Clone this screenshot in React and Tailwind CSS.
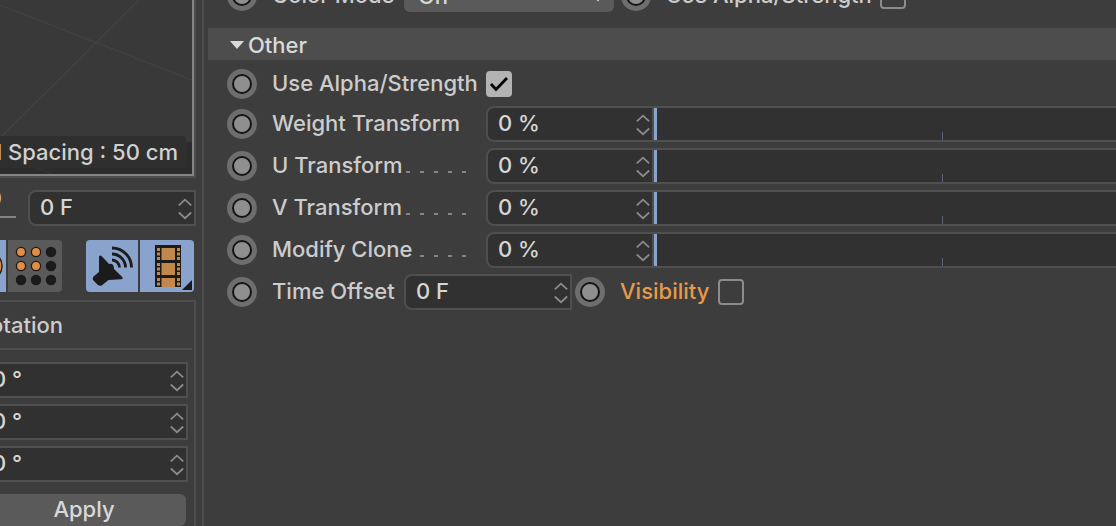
import React, { useState } from 'react';
import clsx from 'clsx';

const transforms = [
  { id: 'weight', label: 'Weight Transform', dots: 0 },
  { id: 'u', label: 'U Transform', dots: 5 },
  { id: 'v', label: 'V Transform', dots: 5 },
  { id: 'clone', label: 'Modify Clone', dots: 4 },
];

const Stepper = () => (
  <svg className="pointer-events-none shrink-0" width="16" height="24" viewBox="0 0 16 24" fill="none" stroke="#8b8b8b" strokeWidth="1.8">
    <path d="M0.8 9.3 L7 3.6 L13.2 9.3 M0.8 16.5 L7 22.2 L13.2 16.5" />
  </svg>
);

const NumberField = ({ label, id, value, className }) => {
  const [text, setText] = useState(value);
  return (
    <div className={clsx('flex h-9 shrink-0 items-center border-2 border-[#4f4f4f] bg-[#313131]', className)}>
      <input
        id={id}
        aria-label={label}
        value={text}
        onChange={(e) => setText(e.target.value)}
        className="h-8 w-full min-w-0 bg-transparent pb-0.5 text-[#d6d6d6] outline-none"
      />
      <Stepper />
    </div>
  );
};

const Keyframe = ({ label }) => (
  <button type="button" aria-label={label} className="flex size-[30px] shrink-0 items-center justify-center rounded-full bg-[#6e6e6e]">
    <span className="size-5 rounded-full border-2 border-[#151515] bg-[#8f8f8f]" />
  </button>
);

const Checkbox = ({ id, checked }) => {
  const [on, setOn] = useState(checked);
  return (
    <span className="grid size-[26px] shrink-0">
      <input
        id={id}
        type="checkbox"
        checked={on}
        onChange={() => setOn(!on)}
        className="col-start-1 row-start-1 size-[26px] appearance-none rounded border-2 border-[#8c8c8c] checked:border-[#b3b3b3] checked:bg-[#b3b3b3]"
      />
      {on && (
        <svg className="pointer-events-none col-start-1 row-start-1" viewBox="0 0 26 26" fill="none" stroke="#000" strokeWidth="2.8">
          <path d="M5 13 L10 18.5 L21 7" />
        </svg>
      )}
    </span>
  );
};

const Viewport = () => (
  <div className="w-full pr-1.5">
    <div className="border-r-2 border-b-2 border-[#4d4d4d]">
      <div className="grid h-[176px] border-r-2 border-b-2 border-[#858585] bg-[#393939]">
        <svg className="col-start-1 row-start-1 h-full w-full" viewBox="0 0 192 174" fill="none" stroke="#414141" strokeWidth="1.5">
          <path d="M0 142 H192 V174 H0Z" fill="#2c2c2c" stroke="none" />
          <path d="M0 5 L192 80 M0 138 L141 -2" />
          <path d="M28 164 L52 174" stroke="#333" />
        </svg>
        <div className="col-start-1 row-start-1 flex min-w-0 items-end justify-end self-end overflow-hidden pr-1.5 pb-1.5">
          <div className="flex h-8 shrink-0 items-center rounded-sm bg-[#2f2f2f] pr-2 pl-3 whitespace-nowrap text-[#d0d0d0]">
            Grid Spacing : 50 cm
          </div>
        </div>
      </div>
    </div>
  </div>
);

const dotRows = [12, 26, 40];

const Toolbar = () => (
  <div className="flex h-[52px] shrink-0 justify-end pr-2">
    <button type="button" aria-label="Parameter" className="w-[54px] shrink-0 rounded-l bg-[#8aa3cc]">
      <svg width="54" height="52" viewBox="0 0 54 52">
        <circle cx="35.500" cy="26" r="14.500" fill="#e38d42" stroke="#1b1b1b" strokeWidth="1.4" />
      </svg>
    </button>
    <button type="button" aria-label="Point level animation" className="ml-0.5 w-[54px] shrink-0 rounded-r bg-[#5a5a5a]">
      <svg width="54" height="52" viewBox="0 0 54 52">
        {dotRows.map((y, r) =>
          [13, 28, 43].map((x, c) => (
            <circle key={`${x}-${y}`} cx={x} cy={y} r="4.6" fill={r < 2 && c < 2 ? '#e38d42' : '#1b1b1b'} stroke="#1b1b1b" strokeWidth="1.3" />
          )),
        )}
      </svg>
    </button>
    <button type="button" aria-label="Play sound" className="ml-6 w-[52px] shrink-0 rounded-l bg-[#8aa3cc]">
      <svg width="52" height="52" viewBox="0 0 52 52">
        <path d="M13 16.5 Q14 14.5 16 16.5 L23 24 Q28 23 28 29 L36.5 37.3 Q37.5 39 35.5 39.3 L22.5 40 L16 45.3 Q14 46.5 12 45 L7.5 40.5 Q6 38.5 7.5 36.5 L13 32Z" fill="#1b1b1b" />
        <path d="M26 20 A7.5 7.5 0 0 1 33.5 27.5 M26 14 A13.5 13.5 0 0 1 39.5 27.5 M26 8 A19.5 19.5 0 0 1 45.5 27.5" fill="none" stroke="#1b1b1b" strokeWidth="2.8" />
      </svg>
    </button>
    <button type="button" aria-label="Frame rate" className="ml-0.5 w-[54px] shrink-0 rounded-r bg-[#8aa3cc]">
      <svg width="54" height="52" viewBox="0 0 54 52">
        <path d="M15 5 H41 V47 H15Z" fill="#1b1b1b" />
        <path d="M21.5 8 H35 V20 H21.5Z M21.5 23 H35 V35 H21.5Z M21.5 38 H35 V47 H21.5Z" fill="#c2874a" />
        {[8, 12.5, 17, 23, 27.5, 32, 38, 42.5].map((y) => (
          <path key={y} d={`M17 ${y} h3 v3 h-3Z M37 ${y} h3 v3 h-3Z`} fill="#c2874a" />
        ))}
        <path d="M52 40 V50 H42Z" fill="#1b1b1b" />
      </svg>
    </button>
  </div>
);

const LeftPanel = () => (
  <aside className="flex w-[204px] shrink-0 flex-col overflow-hidden border-r-2 border-[#4d4d4d]">
    <Viewport />
    <div className="mt-3 flex items-start justify-end pr-1.5">
      <div className="mr-3 flex h-7 w-16 shrink-0 justify-end border-b-2 border-[#858585] pr-[14px] leading-4">0</div>
      <NumberField label="Current frame" value="0 F" className="w-[168px] rounded-l-lg pl-[10px]" />
    </div>
    <div className="mt-3.5">
      <Toolbar />
    </div>
    <section className="mt-2 mr-1.5 flex grow flex-col items-end border-t-2 border-r-2 border-[#4d4d4d] pr-0.5">
      <h2 className="flex h-12 w-[300px] shrink-0 items-center justify-end border-b-2 border-[#4d4d4d] pr-[129px] font-[450]">Rotation</h2>
      <div className="mt-3 flex flex-col gap-1.5 pr-1">
        {['H', 'P', 'B'].map((axis) => (
          <NumberField key={axis} label={`Rotation ${axis}`} value="0 °" className="w-[206px] pl-2" />
        ))}
      </div>
      <button type="button" className="mt-3 mr-1.5 h-8 w-[204px] shrink-0 rounded-md bg-[#5a5a5a] pb-0.5 text-[#d8d8d8]">Apply</button>
    </section>
  </aside>
);

const TransformRow = ({ id, label, dots }) => {
  const [amount, setAmount] = useState(0);
  return (
    <div className="flex h-9 items-center">
      <Keyframe label={`Animate ${label}`} />
      <div className="ml-[15px] flex w-[214px] shrink-0 items-center pr-5">
        <label htmlFor={id} className="grow pb-0.5 whitespace-nowrap">{label}</label>
        <span className="flex gap-[10px] pt-3">
          {Array.from({ length: dots }, (_, i) => (
            <span key={i} className="h-0.5 w-1 bg-[#858585]" />
          ))}
        </span>
      </div>
      <NumberField id={id} value="0 %" className="w-[168px] rounded-l-lg pl-[10px]" />
      <div className="grid h-9 grow grid-cols-1 border-y-2 border-[#4f4f4f] bg-[#313131]">
        <span className="col-start-1 row-start-1 ml-72 h-2 w-px self-end bg-[#5b6577]" />
        <input
          type="range"
          aria-label={`${label} amount`}
          value={amount}
          onChange={(e) => setAmount(e.target.value)}
          className="col-start-1 row-start-1 h-8 w-full appearance-none bg-transparent [&::-webkit-slider-thumb]:h-8 [&::-webkit-slider-thumb]:w-[3px] [&::-webkit-slider-thumb]:appearance-none [&::-webkit-slider-thumb]:bg-[#8aa3cc]"
        />
      </div>
    </div>
  );
};

const Attributes = () => (
  <main className="min-w-0 grow overflow-hidden pl-1">
    <div className="flex h-7 items-end overflow-hidden pb-3.5 pl-[19px]">
      <div className="flex h-9 items-center">
        <Keyframe label="Animate Color Mode" />
        <label htmlFor="color-mode" className="ml-[15px] w-[132px] pb-0.5 whitespace-nowrap">Color Mode</label>
        <div className="grid grid-cols-1 items-center">
          <select id="color-mode" defaultValue="On" className="col-start-1 row-start-1 h-8 w-[210px] appearance-none rounded-md bg-[#5a5a5a] pl-[14px] text-[#d8d8d8]">
            <option>On</option>
            <option>Off</option>
          </select>
          <svg className="pointer-events-none col-start-1 row-start-1 mr-2.5 justify-self-end" width="12" height="12" viewBox="0 0 12 12" fill="none" stroke="#d0d0d0" strokeWidth="2">
            <path d="M1 5 L6 10 L11 5" />
          </svg>
        </div>
        <span className="ml-[7px] flex"><Keyframe label="Animate Use Alpha/Strength" /></span>
        <label htmlFor="color-alpha" className="ml-[15px] w-[214px] pb-0.5 whitespace-nowrap">Use Alpha/Strength</label>
        <Checkbox id="color-alpha" checked={false} />
      </div>
    </div>
    <button type="button" aria-expanded="true" className="flex h-8 w-full items-center bg-[#4d4d4d] pt-0.5 pl-[22px] text-[#dadada]">
      <svg width="14" height="8" viewBox="0 0 14 8" fill="#dadada">
        <path d="M0 0 H14 L7 8Z" />
      </svg>
      <span className="ml-1">Other</span>
    </button>
    <div className="pl-[19px]">
      <div className="mt-2 flex h-8 items-center">
        <Keyframe label="Animate Use Alpha/Strength" />
        <label htmlFor="alpha" className="ml-[15px] w-[214px] shrink-0 pb-0.5 whitespace-nowrap">Use Alpha/Strength</label>
        <Checkbox id="alpha" checked />
      </div>
      <div className="mt-1.5 flex flex-col gap-1.5">
        {transforms.map((row) => (
          <TransformRow key={row.id} {...row} />
        ))}
        <div className="flex h-9 items-center">
          <Keyframe label="Animate Time Offset" />
          <label htmlFor="time" className="ml-[15px] w-[132px] shrink-0 pb-0.5 whitespace-nowrap">Time Offset</label>
          <NumberField id="time" value="0 F" className="w-[168px] rounded-l-lg pl-[10px]" />
          <span className="ml-[3px] flex"><Keyframe label="Animate Visibility" /></span>
          <label htmlFor="visibility" className="ml-[15px] w-[98px] shrink-0 pb-0.5 text-[#e79a4b]">Visibility</label>
          <Checkbox id="visibility" checked={false} />
        </div>
      </div>
    </div>
  </main>
);

export default function App() {
  return (
    <div className="flex h-screen overflow-hidden bg-[#3d3d3d] font-['Inter','Liberation_Sans',sans-serif] text-[22px] leading-7 font-[450] text-[#cccccc] antialiased">
      <LeftPanel />
      <Attributes />
    </div>
  );
}
